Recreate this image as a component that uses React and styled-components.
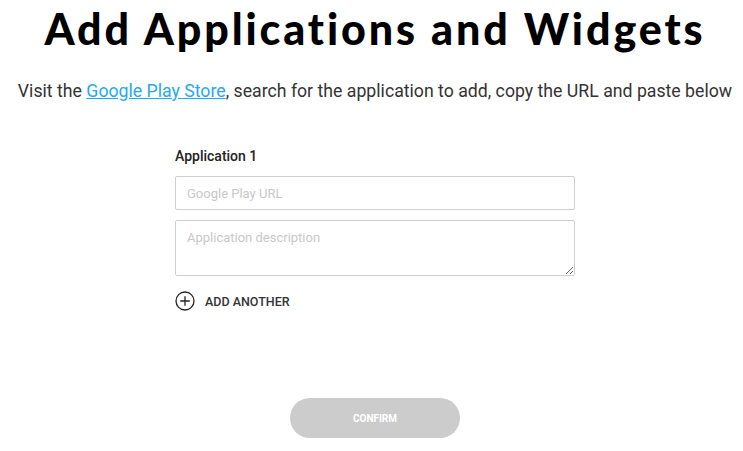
import React, { useState } from "react";
import styled, { createGlobalStyle } from "styled-components";

const GlobalStyle = createGlobalStyle`
  * { box-sizing: border-box; }
  body {
    margin: 0;
    background: #fff;
    font-family: "Roboto", "Open Sans", sans-serif;
    color: #222;
    overflow: hidden;
  }
`;

function PlusCircle() {
  return (
    <svg width="20" height="20" viewBox="0 0 20 20" fill="none">
      <circle cx="10" cy="10" r="9" stroke="#222" strokeWidth="1.3" />
      <path d="M10 5.2v9.6M5.2 10h9.6" stroke="#222" strokeWidth="1.3" />
    </svg>
  );
}

function App() {
  const [apps, setApps] = useState([{ url: "", description: "" }]);
  const canConfirm = apps.some((a) => a.url !== "");

  const update = (i, key, value) => {
    setApps(apps.map((a, j) => (j === i ? { ...a, [key]: value } : a)));
  };

  return (
    <Page>
      <GlobalStyle />
      <Title>Add Applications and Widgets</Title>
      <Intro>
        Visit the <a href="#play">Google Play Store</a>, search for the
        application to add, copy the URL and paste below
      </Intro>
      <Form onSubmit={(e) => e.preventDefault()}>
        {apps.map((app, i) => (
          <AppBlock key={i}>
            <Label>Application {i + 1}</Label>
            <UrlInput
              type="text"
              placeholder="Google Play URL"
              value={app.url}
              onChange={(e) => update(i, "url", e.target.value)}
            />
            <Description
              placeholder="Application description"
              value={app.description}
              onChange={(e) => update(i, "description", e.target.value)}
            />
          </AppBlock>
        ))}
        <AddButton
          type="button"
          onClick={() => setApps([...apps, { url: "", description: "" }])}
        >
          <PlusCircle />
          ADD ANOTHER
        </AddButton>
      </Form>
      <ConfirmButton disabled={!canConfirm}>CONFIRM</ConfirmButton>
    </Page>
  );
}

const Page = styled.main`
  display: flex;
  flex-direction: column;
  align-items: center;
  width: 743px;
  padding-left: 7px;
`;

const Title = styled.h1`
  margin: 0;
  font-family: "Lato", sans-serif;
  font-weight: 900;
  font-size: 43px;
  line-height: 58px;
  letter-spacing: 2.9px;
  color: #000;
  white-space: nowrap;
`;

const Intro = styled.p`
  margin: 21px 0 0;
  font-size: 17.7px;
  line-height: 24px;
  color: #333;
  white-space: nowrap;
  a {
    color: #25a9f4;
    text-decoration: underline;
  }
`;

const Form = styled.form`
  width: 400px;
  margin-top: 44px;
  display: flex;
  flex-direction: column;
`;

const AppBlock = styled.div`
  display: flex;
  flex-direction: column;
  gap: 10px;
`;

const Label = styled.label`
  font-size: 14px;
  font-weight: 500;
  color: #222;
  line-height: 18px;
  margin-bottom: 1px;
`;

const fieldStyle = `
  width: 100%;
  border: 1px solid #cfcfcf;
  border-radius: 2px;
  padding: 0 11px;
  font-family: "Roboto", sans-serif;
  font-size: 13px;
  color: #333;
  outline: none;
  &::placeholder { color: #c8c8c8; }
`;

const UrlInput = styled.input`
  ${fieldStyle}
  height: 34px;
`;

const Description = styled.textarea`
  ${fieldStyle}
  height: 56px;
  padding-top: 9px;
  resize: vertical;
`;

const AddButton = styled.button`
  display: flex;
  align-items: center;
  gap: 10px;
  margin-top: 15px;
  padding: 0;
  border: 0;
  background: none;
  font-family: "Roboto", sans-serif;
  font-size: 12.5px;
  font-weight: 500;
  color: #333;
  cursor: pointer;
  align-self: flex-start;
`;

const ConfirmButton = styled.button`
  margin-top: 87px;
  width: 170px;
  height: 40px;
  border: 0;
  border-radius: 20px;
  background: ${(p) => (p.disabled ? "#cccccc" : "#1428a0")};
  color: #fff;
  font-family: "Roboto", sans-serif;
  font-size: 10px;
  font-weight: 700;
`;

export default App;
